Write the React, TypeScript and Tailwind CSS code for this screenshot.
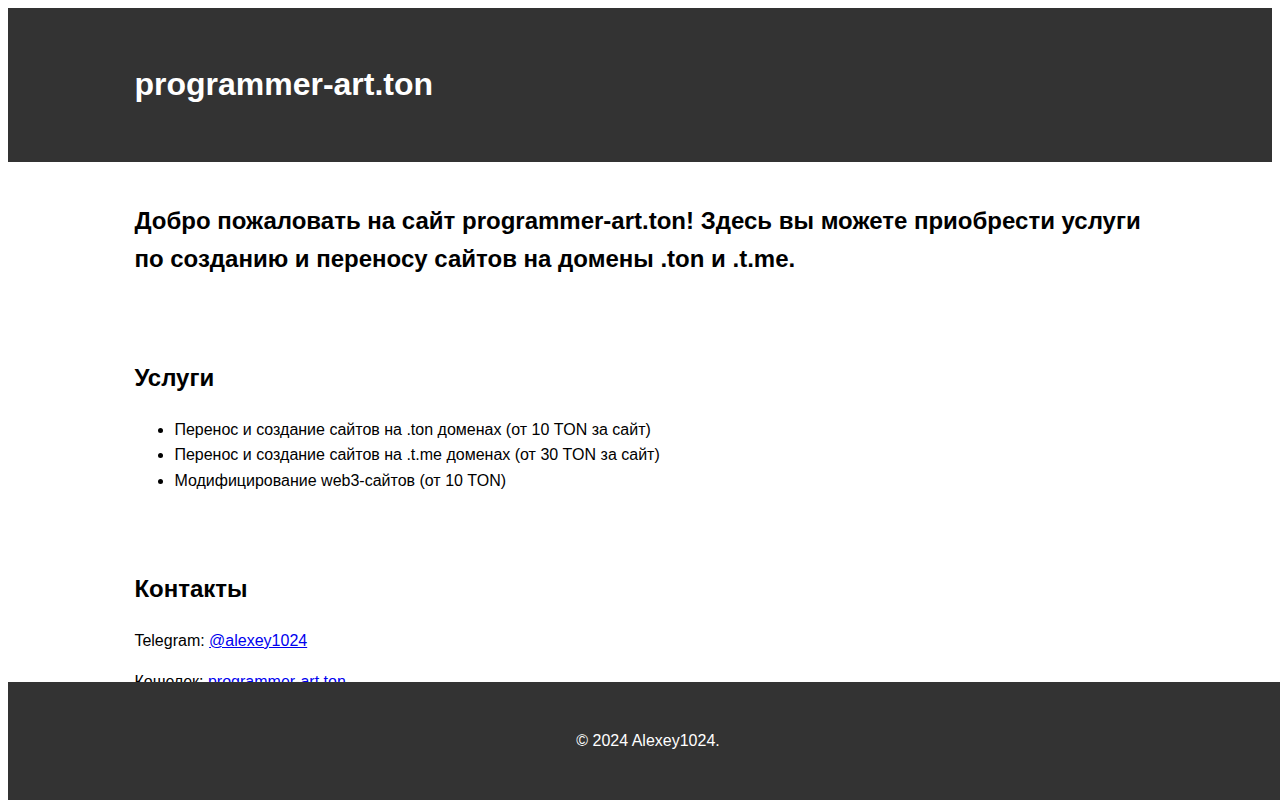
import React from "react";

const services = [
  "Перенос и создание сайтов на .ton доменах (от 10 TON за сайт)",
  "Перенос и создание сайтов на .t.me доменах (от 30 TON за сайт)",
  "Модифицирование web3-сайтов (от 10 TON)",
];

const Section = ({ children }: { children: React.ReactNode }) => (
  <section className="py-5">{children}</section>
);

const Heading = ({ children }: { children: React.ReactNode }) => (
  <h2 className="text-[24px] font-bold leading-[1.6] my-[19.92px]">
    {children}
  </h2>
);

const App = () => {
  return (
    <div className="m-2 font-['Liberation_Sans',Arial,sans-serif] text-[16px] leading-[1.6] text-black">
      <header className="bg-[#333] text-white py-[30px]">
        <div className="w-4/5 mx-auto">
          <h1 className="text-[32px] font-bold leading-[1.6] my-[21.44px]">
            programmer-art.ton
          </h1>
        </div>
      </header>

      <main className="w-4/5 mx-auto">
        <Section>
          <Heading>
            Добро пожаловать на сайт programmer-art.ton! Здесь вы можете
            приобрести услуги по созданию и переносу сайтов на домены .ton и
            .t.me.
          </Heading>
        </Section>

        <Section>
          <Heading>Услуги</Heading>
          <ul className="list-disc pl-10 my-4">
            {services.map((s) => (
              <li key={s}>{s}</li>
            ))}
          </ul>
        </Section>

        <Section>
          <Heading>Контакты</Heading>
          <p className="my-4">
            Telegram:{" "}
            <a href="#" className="text-[#0000ee] underline">
              @alexey1024
            </a>
          </p>
          <p className="my-4">
            Кошелек:{" "}
            <a href="#" className="text-[#0000ee] underline">
              programmer-art.ton
            </a>
          </p>
        </Section>
      </main>

      <footer className="fixed bottom-0 left-2 w-full bg-[#333] text-white text-center py-[30px]">
        <p className="my-4">© 2024 Alexey1024.</p>
      </footer>
    </div>
  );
};

export default App;
